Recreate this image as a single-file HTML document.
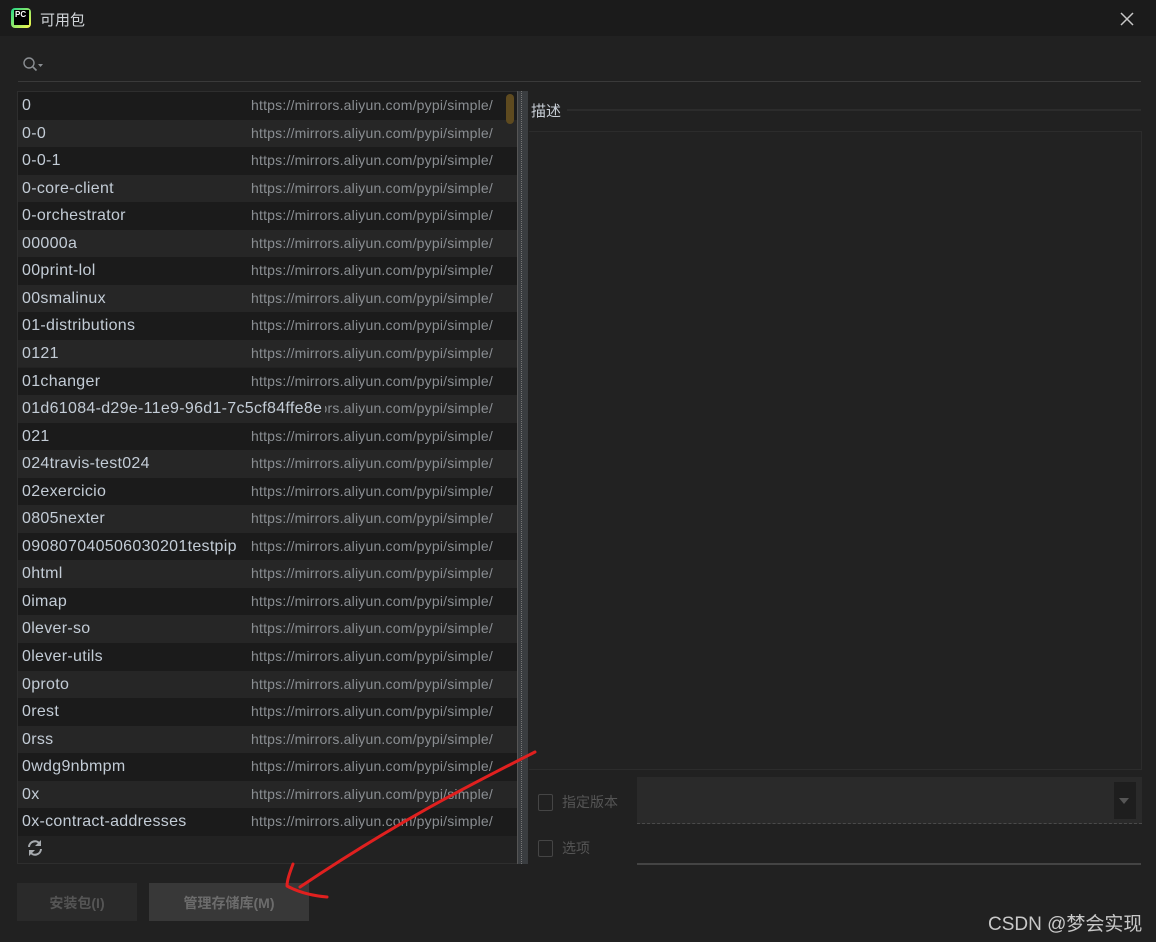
<!DOCTYPE html>
<html><head><meta charset="utf-8"><style>
*{margin:0;padding:0;box-sizing:border-box}
body{width:1156px;height:942px;background:#212121;font-family:"Liberation Sans","Noto Sans CJK SC",sans-serif;position:relative;overflow:hidden;color:#c8ced6}
.title{position:absolute;left:0;top:0;width:1156px;height:36px;background:#1b1b1b}
.abs{position:absolute}
.row{position:absolute;left:18px;width:499px;height:27.5px;font-size:16px;line-height:27.5px}
.row .n{position:absolute;left:0;padding-left:4px;padding-right:3px;color:#c3ccd6;white-space:nowrap;letter-spacing:0.3px}
.row .u{position:absolute;left:233px;color:#8a8e92;font-size:14px;white-space:nowrap;letter-spacing:0.2px}
.d,.d .n{background:#1b1b1b}.l,.l .n{background:#262626}
</style></head><body>
<div class="title"></div>
<div class="abs" style="left:11px;top:8px;width:20px;height:20px;border-radius:4px;background:linear-gradient(135deg,#21d789,#fcf84a)"></div>
<div class="abs" style="left:14px;top:10px;width:15px;height:15px;background:#000;color:#fff;font-size:8px;font-weight:bold;line-height:9px;padding-left:1px">PC</div>
<div class="abs" style="left:40px;top:9px;font-size:15px;color:#d0d4d8">可用包</div>
<svg class="abs" style="left:1119px;top:11px" width="16" height="16"><path d="M2 2L14 14M14 2L2 14" stroke="#c8c8c8" stroke-width="1.5"/></svg>
<svg class="abs" style="left:22px;top:56px" width="24" height="18"><circle cx="7" cy="7" r="5" fill="none" stroke="#8a8e92" stroke-width="1.4"/><path d="M11 11L14.5 14.5" stroke="#8a8e92" stroke-width="1.6"/><path d="M16 8h5l-2.5 3z" fill="#8a8e92"/></svg>
<div class="abs" style="left:18px;top:81px;width:1123px;height:1px;background:#3a3a3a"></div>
<div class="abs" style="left:17px;top:91px;width:501px;height:773px;border:1px solid #2e2e2e;background:#222"></div>
<div id="list"></div>
<div class="abs" style="left:506px;top:94px;width:8px;height:30px;border-radius:4px;background:#5e4a1f"></div>
<div class="abs" style="left:517px;top:91px;width:11px;height:773px;background:#3a3d40;border-left:1px solid #555"></div>
<div class="abs" style="left:521px;top:91px;width:1px;height:773px;border-left:1px dotted #777"></div>
<svg class="abs" style="left:26px;top:839px" width="18" height="18"><path d="M3 8A6 6 0 0 1 14 5M15 10A6 6 0 0 1 4 13" fill="none" stroke="#a8acb0" stroke-width="2"/><path d="M15 1v6h-6z M3 17v-6h6z" fill="#a8acb0"/></svg>
<div class="abs" style="left:531px;top:100px;font-size:15px;color:#c8ced6">描述</div>
<div class="abs" style="left:567px;top:109px;width:574px;height:2px;background:#2c2c2c"></div>
<div class="abs" style="left:529px;top:131px;width:613px;height:639px;border:1px solid #2c2c2c;border-left:none;background:#222"></div>
<div class="abs" style="left:538px;top:794px;width:15px;height:17px;border:1.5px solid #454545;border-radius:2px"></div>
<div class="abs" style="left:562px;top:792px;font-size:14px;color:#555">指定版本</div>
<div class="abs" style="left:637px;top:777px;width:505px;height:47px;background:#2a2a2a;border-bottom:1px dashed #4a4a4a"></div>
<div class="abs" style="left:1114px;top:782px;width:22px;height:37px;background:#1e1e1e"></div>
<svg class="abs" style="left:1118px;top:797px" width="12" height="8"><path d="M1 1h10L6 7z" fill="#555"/></svg>
<div class="abs" style="left:538px;top:840px;width:15px;height:17px;border:1.5px solid #454545;border-radius:2px"></div>
<div class="abs" style="left:562px;top:838px;font-size:14px;color:#555">选项</div>
<div class="abs" style="left:637px;top:863px;width:504px;height:2px;background:#444"></div>
<div class="abs" style="left:17px;top:883px;width:120px;height:38px;background:#2a2a2a;color:#555;font-size:14px;font-weight:bold;text-align:center;line-height:40px">安装包(I)</div>
<div class="abs" style="left:149px;top:883px;width:160px;height:38px;background:#383838;color:#6c6c6c;font-size:14px;font-weight:bold;text-align:center;line-height:40px">管理存储库(M)</div>
<svg class="abs" style="left:0;top:0" width="1156" height="942"><path d="M535 752C470 785 400 820 300 887" fill="none" stroke="#e0201f" stroke-width="3" stroke-linecap="round"/><path d="M293 864C290 872 287 880 287 886C300 893 315 896 327 897" fill="none" stroke="#e0201f" stroke-width="3" stroke-linecap="round" stroke-linejoin="round"/></svg>
<div class="abs" style="left:988px;top:909px;font-size:19px;color:#c8c8c8">CSDN @梦会实现</div>
<script>
var n=["0","0-0","0-0-1","0-core-client","0-orchestrator","00000a","00print-lol","00smalinux","01-distributions","0121","01changer","01d61084-d29e-11e9-96d1-7c5cf84ffe8e","021","024travis-test024","02exercicio","0805nexter","090807040506030201testpip","0html","0imap","0lever-so","0lever-utils","0proto","0rest","0rss","0wdg9nbmpm","0x","0x-contract-addresses"];
var h="";
for(var i=0;i<n.length;i++){var t=92+i*27.55;
h+='<div class="row '+(i%2?'l':'d')+'" style="top:'+t+'px"><span class="u">https://mirrors.aliyun.com/pypi/simple/</span><span class="n">'+n[i]+'</span></div>';}
document.getElementById("list").innerHTML=h;
</script>
</body></html>
